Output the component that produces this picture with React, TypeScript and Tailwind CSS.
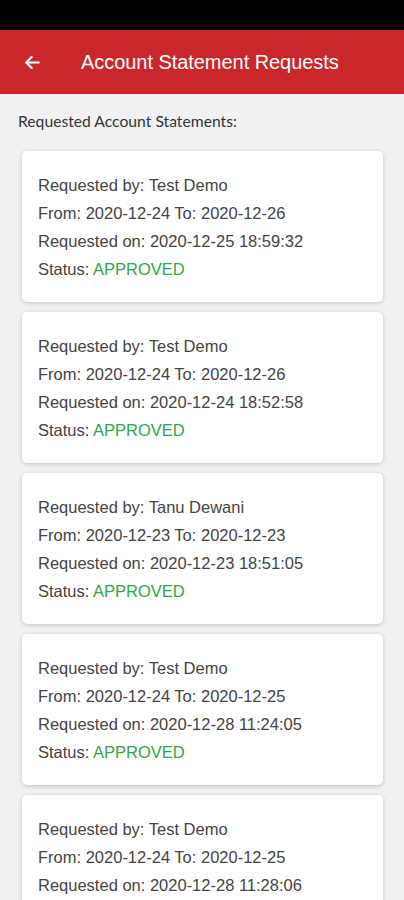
import React from "react";

const items = [
  { by: "Test Demo", from: "2020-12-24", to: "2020-12-26", on: "2020-12-25 18:59:32", status: "APPROVED" },
  { by: "Test Demo", from: "2020-12-24", to: "2020-12-26", on: "2020-12-24 18:52:58", status: "APPROVED" },
  { by: "Tanu Dewani", from: "2020-12-23", to: "2020-12-23", on: "2020-12-23 18:51:05", status: "APPROVED" },
  { by: "Test Demo", from: "2020-12-24", to: "2020-12-25", on: "2020-12-28 11:24:05", status: "APPROVED" },
  { by: "Test Demo", from: "2020-12-24", to: "2020-12-25", on: "2020-12-28 11:28:06", status: "APPROVED" },
];

export default function App() {
  return (
    <div className="w-[404px] h-[900px] overflow-hidden bg-[#f1f1f3] flex flex-col" style={{ fontFamily: "Lato, 'Liberation Sans', sans-serif" }}>
      <div className="h-[30px] bg-black shrink-0" />
      <div className="h-[64px] bg-[#c8282b] flex items-center shrink-0 text-white">
        <div className="w-[64px] flex items-center justify-center pl-[1px]">
          <svg width="19" height="19" viewBox="0 0 24 24" fill="none" stroke="white" strokeWidth="2.8" strokeLinecap="round" strokeLinejoin="round">
            <path d="M20 12H5" />
            <path d="M11 5l-7 7 7 7" />
          </svg>
        </div>
        <div className="pl-[17px] text-[20px] tracking-[-0.05px]" style={{ fontFamily: "'Liberation Sans', Arial, sans-serif" }}>
          Account Statement Requests
        </div>
      </div>
      <div className="pl-[18px] pt-[18px] pb-[21px] text-[15.7px] leading-[18px] text-[#333]">Requested Account Statements:</div>
      <div className="flex flex-col gap-[10px] pl-[22px] pr-[21px]">
        {items.map((it, i) => (
          <div key={i} className="bg-white rounded-[5px] shadow-[0_1px_4px_rgba(0,0,0,0.2)] pl-[16px] pt-[20px] pb-[19px] text-[16.5px] leading-[28px] text-[#444] shrink-0 h-[151px]" style={{ fontFamily: "'Liberation Sans', Arial, sans-serif" }}>
            <div>Requested by: {it.by}</div>
            <div>From: {it.from} To: {it.to}</div>
            <div>Requested on: {it.on}</div>
            <div>
              Status: <span className="text-[#2fa64a]">{it.status}</span>
            </div>
          </div>
        ))}
      </div>
    </div>
  );
}
